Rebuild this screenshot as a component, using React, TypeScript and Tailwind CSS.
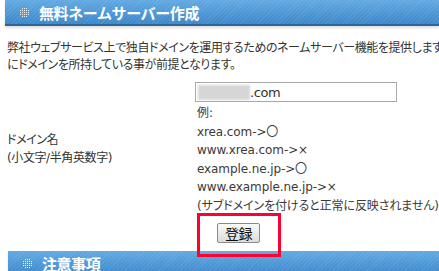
import React from 'react';

const font = "font-['DejaVu_Sans','Noto_Sans_CJK_JP',sans-serif] [font-feature-settings:'palt']";

const DotIcon = () => (
  <svg width="11" height="11" viewBox="0 0 11 11" className="shrink-0">
    {[0, 1, 2, 3, 4].map((r) =>
      [0, 1, 2, 3, 4].map((c) => {
        const corner = (r === 0 || r === 4) && (c === 0 || c === 4);
        if (corner) return null;
        return <rect key={`${r}-${c}`} x={1 + c * 2} y={1 + r * 2} width="1" height="1" fill="#e8f2fb" />;
      })
    )}
  </svg>
);

const SectionHeader = ({ title, className = '' }: { title: string; className?: string }) => (
  <div className={`h-[28px] ${className}`}>
    <div className="h-[26px] flex items-center pl-[14px] gap-[9px] border-b-2 border-[#2f6497] shadow-[0_2px_2px_rgba(0,0,0,0.12)] bg-[repeating-linear-gradient(135deg,rgba(255,255,255,0.07)_0px,rgba(255,255,255,0.07)_1px,transparent_1px,transparent_3px),linear-gradient(#63aae2,#3d88cb)]">
      <DotIcon />
      <span className="text-white font-bold text-[15px] leading-none tracking-[-0.4px] [font-feature-settings:normal] font-['Noto_Sans_CJK_JP',sans-serif]">{title}</span>
    </div>
  </div>
);

const examples = [
  '例:',
  'xrea.com->〇',
  'www.xrea.com->×',
  'example.ne.jp->〇',
  'www.example.ne.jp->×',
  '(サブドメインを付けると正常に反映されません)',
];

export default function App() {
  return (
    <div className={`w-[439px] h-[271px] overflow-hidden bg-white relative text-[#333] tracking-[-0.4px] ${font}`}>
      <SectionHeader title="無料ネームサーバー作成" className="ml-[5px]" />

      <p className="mt-[12px] pl-[7px] text-[12px] leading-[17px] whitespace-nowrap">
        弊社ウェブサービス上で独自ドメインを運用するためのネームサーバー機能を提供します。ご利用には
        <br />
        にドメインを所持している事が前提となります。
      </p>

      <div className="flex items-center mt-[8px]">
        <div className="w-[190px] shrink-0 pl-[7px] flex flex-col text-[12px] leading-[18px]">
          <span>ドメイン名</span>
          <span>(小文字/半角英数字)</span>
        </div>
        <div className="flex flex-col">
          <div className="ml-[5px] w-[202px] h-[20px] border border-[#a9a9a9] flex items-center pl-[2px] text-[13px]">
            <div className="w-[52px] h-[15px] bg-[#d6d6d6] blur-[1px]" />
            <span className="leading-none">.com</span>
          </div>
          <div className="pl-[7px] mt-[2px] text-[12px] leading-[18.5px] tracking-[-0.1px] text-[#3a3a3a]">
            {examples.map((e) => (
              <div key={e} className="whitespace-nowrap">{e}</div>
            ))}
          </div>
        </div>
      </div>

      <div className="flex pl-[217px] mt-[8px]">
        <button className="h-[20px] w-[43px] border border-[#8a8a8a] rounded-[2px] bg-[linear-gradient(#fafafa,#dcdcdc)] text-[14px] leading-none text-[#111] font-['Noto_Sans_CJK_JP',sans-serif]">
          登録
        </button>
      </div>

      <SectionHeader title="注意事項" className="ml-[8px] mt-[8px]" />

      <div className="absolute left-[197px] top-[213px] w-[84px] h-[44px] border-[3px] border-[#ff0033]" />
    </div>
  );
}
